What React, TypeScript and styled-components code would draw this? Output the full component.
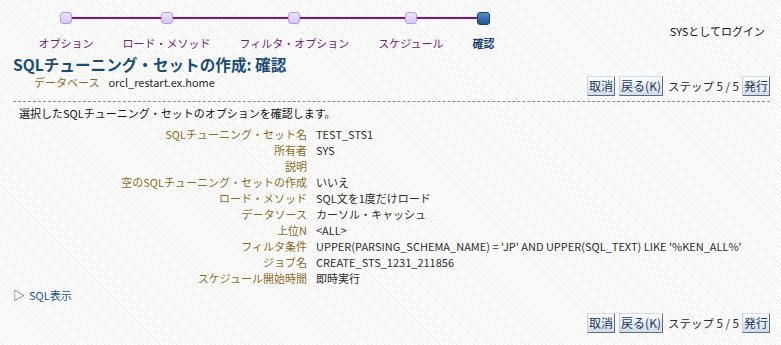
import type { FC } from "react";
import { Fragment } from "react";
import { styled, createGlobalStyle } from "styled-components";

const GlobalStyle = createGlobalStyle`
  html, body {
    margin: 0;
    padding: 0;
  }
  body {
    font-family: "Noto Sans CJK JP", "Noto Sans", sans-serif;
    font-size: 11px;
    color: #2b2b2b;
    background: repeating-linear-gradient(
      45deg,
      #ffffff 0px,
      #ffffff 2px,
      #f1f1f1 2px,
      #f1f1f1 3px
    );
    min-height: 345px;
  }
`;

interface StepProps {
  $active?: boolean;
}

const Page = styled.div`
  padding: 12px 11px 0 13px;
`;

const Header = styled.div`
  display: flex;
  justify-content: space-between;
  align-items: flex-start;
`;

const Train = styled.div`
  display: flex;
  margin-left: 11px;
`;

const Step = styled.div`
  display: flex;
  flex-direction: column;
  align-items: center;
  padding: 0 14.5px;
`;

const NodeRow = styled.div`
  display: flex;
  align-items: center;
  align-self: stretch;
  margin: 0 -14.5px;
  height: 12px;
`;

const Segment = styled.div<{ $hidden?: boolean }>`
  flex: 1;
  height: 2px;
  background: ${({ $hidden }) => ($hidden ? "transparent" : "#85108a")};
`;

const Node = styled.div<StepProps>`
  box-sizing: border-box;
  width: ${({ $active }) => ($active ? "13px" : "12px")};
  height: ${({ $active }) => ($active ? "13px" : "12px")};
  border-radius: 3px;
  border: 1px solid ${({ $active }) => ($active ? "#123f73" : "#b39ce6")};
  background: ${({ $active }) =>
    $active
      ? "linear-gradient(#4f8cc8, #1d5796)"
      : "linear-gradient(#ebe3fc, #d5c6f5)"};
`;

const StepLabel = styled.div<StepProps>`
  margin-top: 12px;
  line-height: 14px;
  white-space: nowrap;
  color: ${({ $active }) => ($active ? "#173f6e" : "#6e2177")};
  font-weight: ${({ $active }) => ($active ? 700 : 400)};
`;

const Login = styled.div`
  margin-top: 12px;
  margin-right: 5px;
  line-height: 14px;
  color: #111;
`;

const Head = styled.div`
  display: flex;
  justify-content: space-between;
  align-items: flex-end;
  margin-top: 5px;
  padding-bottom: 5px;
  border-bottom: 1px dashed #8a8a8a;
`;

const TitleBlock = styled.div`
  display: flex;
  flex-direction: column;
`;

const Title = styled.h1`
  margin: 0;
  font-size: 15.6px;
  line-height: 18px;
  font-weight: 700;
  color: #1b4c75;
`;

const DbLine = styled.div`
  display: flex;
  gap: 9px;
  margin: 2px 0 7px 21px;
  line-height: 14px;
`;

const Label = styled.span`
  color: #8a6a1c;
`;

const Value = styled.span`
  color: #2b2b2b;
`;

const ButtonBar = styled.div`
  display: flex;
  align-items: center;
  justify-content: flex-end;
`;

const Button = styled.button`
  box-sizing: border-box;
  height: 20px;
  padding: 0 1px;
  margin: 0;
  font-family: inherit;
  font-size: 12px;
  line-height: 16px;
  color: #1d3a57;
  background: linear-gradient(#fbfcfe, #d2dce8);
  border: 1px solid;
  border-color: #d3dbe5 #5e6e80 #5e6e80 #c7d0db;
  border-radius: 1px;
  cursor: pointer;
`;

const StepCount = styled.span`
  font-size: 11.5px;
  color: #2b2b2b;
  margin: 0 3px 0 5px;
  white-space: pre;
`;

const Gap = styled.span`
  width: 4px;
`;

const Intro = styled.p`
  margin: 3px 0 0 6px;
  line-height: 16px;
  color: #111;
`;

const Details = styled.div`
  display: grid;
  grid-template-columns: 294px 1fr;
  column-gap: 9px;
  margin-top: 5px;
  line-height: 16px;
`;

const DetailLabel = styled.div`
  text-align: right;
  color: #8a6a1c;
  white-space: nowrap;
`;

const DetailValue = styled.div`
  color: #2b2b2b;
  white-space: nowrap;
`;

const Disclosure = styled.div`
  display: flex;
  align-items: center;
  gap: 4px;
  margin-top: 1px;
  line-height: 16px;
`;

const Triangle = styled.span`
  color: #333;
  font-size: 12px;
`;

const SqlLink = styled.a`
  color: #1c4f8c;
  text-decoration: none;
`;

const Footer = styled.div`
  margin-top: 10px;
`;

const steps = [
  "オプション",
  "ロード・メソッド",
  "フィルタ・オプション",
  "スケジュール",
  "確認",
];

const rows: [string, string][] = [
  ["SQLチューニング・セット名", "TEST_STS1"],
  ["所有者", "SYS"],
  ["説明", ""],
  ["空のSQLチューニング・セットの作成", "いいえ"],
  ["ロード・メソッド", "SQL文を1度だけロード"],
  ["データソース", "カーソル・キャッシュ"],
  ["上位N", "<ALL>"],
  [
    "フィルタ条件",
    "UPPER(PARSING_SCHEMA_NAME) = 'JP' AND UPPER(SQL_TEXT) LIKE '%KEN_ALL%'",
  ],
  ["ジョブ名", "CREATE_STS_1231_211856"],
  ["スケジュール開始時間", "即時実行"],
];

const Buttons: FC = () => (
  <ButtonBar>
    <Button>取消</Button>
    <Gap />
    <Button>戻る(K)</Button>
    <StepCount>ステップ 5 / 5</StepCount>
    <Button>発行</Button>
  </ButtonBar>
);

const App: FC = () => {
  return (
    <>
      <GlobalStyle />
      <Page>
        <Header>
          <Train>
            {steps.map((s, i) => {
              const active = i === steps.length - 1;
              return (
                <Step key={s}>
                  <NodeRow>
                    <Segment $hidden={i === 0} />
                    <Node $active={active} />
                    <Segment $hidden={i === steps.length - 1} />
                  </NodeRow>
                  <StepLabel $active={active}>{s}</StepLabel>
                </Step>
              );
            })}
          </Train>
          <Login>SYSとしてログイン</Login>
        </Header>

        <Head>
          <TitleBlock>
            <Title>SQLチューニング・セットの作成: 確認</Title>
            <DbLine>
              <Label>データベース</Label>
              <Value>orcl_restart.ex.home</Value>
            </DbLine>
          </TitleBlock>
          <Buttons />
        </Head>

        <Intro>選択したSQLチューニング・セットのオプションを確認します。</Intro>

        <Details>
          {rows.map(([label, value]) => (
            <Fragment key={label}>
              <DetailLabel>{label}</DetailLabel>
              <DetailValue>{value}</DetailValue>
            </Fragment>
          ))}
        </Details>

        <Disclosure>
          <Triangle>▷</Triangle>
          <SqlLink href="#">SQL表示</SqlLink>
        </Disclosure>

        <Footer>
          <Buttons />
        </Footer>
      </Page>
    </>
  );
};

export default App;
